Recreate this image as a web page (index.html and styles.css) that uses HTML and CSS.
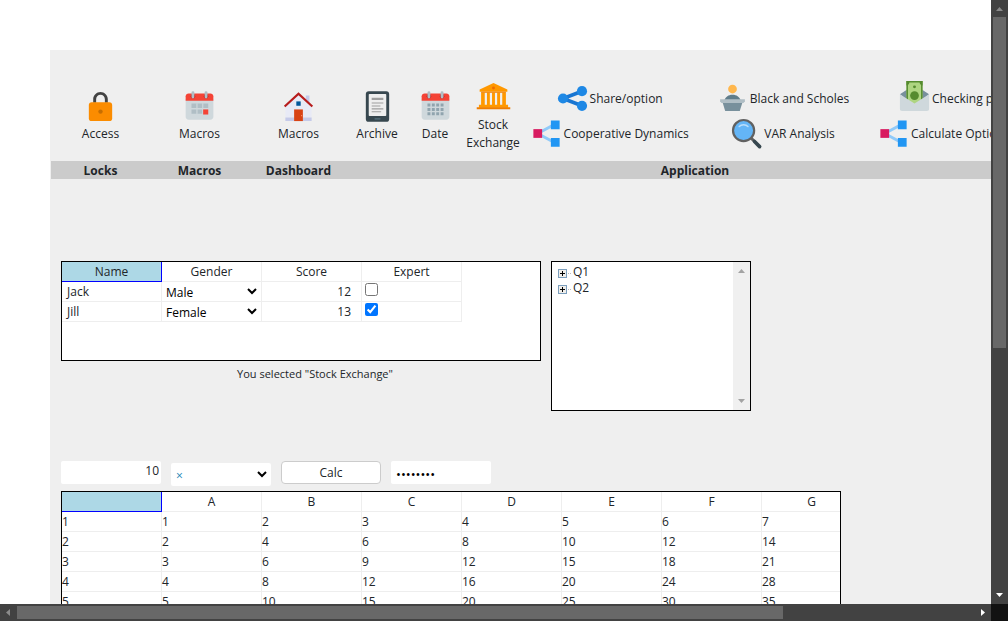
FILE: index.html
```
<!DOCTYPE html>
<html lang="en">
<head>
<meta charset="utf-8">
<title>Dashboard</title>
<link rel="stylesheet" href="styles.css">
</head>
<body>
<svg width="0" height="0" class="defs" aria-hidden="true">
  <symbol id="rings" viewBox="0 0 48 48">
    <path fill="#CFD8DC" d="M5 38V14h38v24c0 2.200-1.800 4-4 4H9c-2.200 0-4-1.800-4-4z"/>
    <path fill="#F44336" d="M43 10v6H5v-6c0-2.200 1.800-4 4-4h30c2.200 0 4 1.800 4 4z"/>
    <circle fill="#B71C1C" cx="15" cy="10" r="3"/><circle fill="#B71C1C" cx="33" cy="10" r="3"/>
    <path stroke="#B0BEC5" stroke-width="4" stroke-linecap="round" d="M15 5v6M33 5v6"/>
  </symbol>
  <symbol id="nodes" viewBox="0 0 48 48">
    <path fill="none" stroke="#90CAF9" stroke-width="4" d="M36 11L12 24l24 13"/>
    <path fill="#D81B60" d="M6 18h12v12H6z"/>
    <path fill="#2196F3" d="M30 6h12v12H30zM30 30h12v12H30z"/>
  </symbol>
</svg>
<main class="view">
  <div class="form">
    <div class="ribbon">
      <section class="group">
        <div class="tools">
          <button class="tool"><svg viewBox="0 0 48 48"><path fill="#424242" d="M24 4c-5.500 0-10 4.500-10 10v5h4v-5c0-3.300 2.700-6 6-6s6 2.700 6 6v5h4v-5c0-5.500-4.500-10-10-10z"/><rect fill="#FB8C00" x="8" y="18" width="32" height="26" rx="4"/><circle fill="#C76E00" cx="24" cy="31" r="3"/></svg>Access</button>
        </div>
        <h2>Locks</h2>
      </section>
      <section class="group">
        <div class="tools">
          <button class="tool"><svg viewBox="0 0 48 48"><use href="#rings"/><path fill="#B0BEC5" d="M13 20h7v6h-7zM21 20h7v6h-7zM29 20h7v6h-7zM13 28h7v6h-7zM21 28h7v6h-7z"/><path stroke="#CFD8DC" d="M20.500 20v14M28.500 20v14"/><path fill="#F44336" d="M29 28h7v7h-7z"/></svg>Macros</button>
        </div>
        <h2>Macros</h2>
      </section>
      <section class="group">
        <div class="tools">
          <button class="tool"><svg viewBox="0 0 48 48"><path fill="#E8EAF6" d="M42 39H6V23L24 6l18 17z"/><path fill="#C5CAE9" d="M39 21l-5-5V9h5zM6 39h36v5H6z"/><path fill="#B71C1C" d="M24 4.300L4 22.900l2 2.200L24 8.400l18 16.700 2-2.200z"/><path fill="#D84315" d="M18 28h12v16H18z"/><path fill="#01579B" d="M21 17h6v6h-6z"/><path fill="#FF8A65" d="M27.500 35.500h1.500v2h-1.500z"/></svg>Macros</button>
        </div>
        <h2>Dashboard</h2>
      </section>
      <section class="group group-wide">
        <div class="tools">
          <button class="tool tool-narrow"><svg viewBox="0 0 48 48"><rect fill="#37474F" x="8" y="3" width="32" height="42" rx="4"/><rect fill="#EEEEEE" x="12" y="7" width="24" height="30" rx="1"/><path fill="#9E9E9E" d="M16 12h16v3H16zM16 18.500h16v1.500H16zM16 22.500h12v1.500H16zM16 26.500h16v1.500H16zM16 30.500h13v1.500H16z"/><path fill="#546E7A" d="M20 40h8v2h-8z"/></svg>Archive</button>
          <button class="tool tool-narrow"><svg viewBox="0 0 48 48"><use href="#rings"/><path fill="#90A4AE" d="M13 20h4v4h-4zM19 20h4v4h-4zM25 20h4v4h-4zM31 20h4v4h-4zM13 26h4v4h-4zM19 26h4v4h-4zM25 26h4v4h-4zM31 26h4v4h-4zM13 32h4v4h-4zM19 32h4v4h-4zM25 32h4v4h-4zM31 32h4v4h-4z"/></svg>Date</button>
          <button class="tool tool-narrow"><svg viewBox="0 0 48 48"><path fill="#FF9800" d="M24 4L5 13v3h38v-3zM7 17h5v17H7zM15 17h4v17h-4zM22 17h4v17h-4zM29 17h4v17h-4zM36 17h5v17h-5zM4 34h40v4H4z"/><path fill="#EF7D00" d="M7 16h34v1.500H7zM1 37.500h46V40H1z"/><circle fill="#EF6C00" cx="24" cy="11" r="2"/></svg>Stock Exchange</button>
          <div class="stack">
            <button class="line"><svg viewBox="0 0 48 48"><path fill="none" stroke="#1976D2" stroke-width="5" d="M37 14L11 24l26 10"/><g fill="#1E88E5"><circle cx="11" cy="24" r="7"/><circle cx="37" cy="14" r="7"/><circle cx="37" cy="34" r="7"/></g></svg>Share/option</button>
            <button class="line"><svg viewBox="0 0 48 48"><use href="#nodes"/></svg>Cooperative Dynamics</button>
          </div>
          <div class="stack">
            <button class="line"><svg viewBox="0 0 48 48"><circle fill="#FFB74D" cx="24" cy="11" r="6"/><path fill="#607D8B" d="M24 19c-6 0-9 3-11 7h22c-2-4-5-7-11-7z"/><path fill="#78909C" d="M10 28h28l-4 13H14z"/><path fill="#B0BEC5" d="M7 25h34v3l-2 2H9l-2-2z"/></svg>Black and Scholes</button>
            <button class="line"><svg viewBox="0 0 48 48"><path stroke="#616161" stroke-width="4" d="M29 29l6 6"/><path stroke="#37474F" stroke-width="5" stroke-linecap="round" d="M35 35l7 7"/><circle fill="#64B5F6" stroke="#616161" stroke-width="3" cx="20" cy="20" r="14.500"/><path fill="none" stroke="#BBDEFB" stroke-width="2" stroke-linecap="round" d="M14 14.500c3-3.500 9-3.500 12 0"/></svg>VAR Analysis</button>
          </div>
          <div class="stack">
            <button class="line"><svg viewBox="0 0 48 48"><path fill="#78909C" d="M4 18L24 5l20 13-20 17z"/><path fill="#AED581" d="M13 0h22v29l-11 7-11-7z"/><path fill="#558B2F" d="M13 0h22v6c-2 0-4-2-4-4H17c0 2-2 4-4 4z"/><path fill="none" stroke="#558B2F" stroke-width="2" d="M14 0v28M34 0v28"/><circle fill="#558B2F" cx="24" cy="20" r="6"/><circle fill="#558B2F" cx="24" cy="8" r="2"/><path fill="#CFD8DC" d="M4 18v20c0 2 1 3 3 3h34c2 0 3-1 3-3V18L24 31z"/></svg>Checking price</button>
            <button class="line"><svg viewBox="0 0 48 48"><use href="#nodes"/></svg>Calculate Option Price</button>
          </div>
        </div>
        <h2>Application</h2>
      </section>
    </div>

    <div class="panels">
      <div class="people">
        <div class="box box-people">
          <table class="grid">
            <tr><th class="picked">Name</th><th>Gender</th><th>Score</th><th>Expert</th></tr>
            <tr><td class="name">Jack</td><td><select aria-label="Gender of Jack"><option>Male</option><option>Female</option></select></td><td class="score">12</td><td><input type="checkbox" aria-label="Jack is an expert"></td></tr>
            <tr><td class="name">Jill</td><td><select aria-label="Gender of Jill"><option>Male</option><option selected>Female</option></select></td><td class="score">13</td><td><input type="checkbox" aria-label="Jill is an expert" checked></td></tr>
          </table>
        </div>
        <p class="message">You selected "Stock Exchange"</p>
      </div>
      <div class="box box-tree">
        <ul class="tree">
          <li><button aria-label="Expand Q1"><svg viewBox="0 0 15 9"><rect x=".5" y=".5" width="8" height="8" fill="#f0eeea" stroke="#7b9ebd"/><path d="M2 4.500h5M4.500 2v5" stroke="#000"/><path d="M10 4.500h1M12 4.500h1" stroke="#bbb"/></svg></button>Q1</li>
          <li><button aria-label="Expand Q2"><svg viewBox="0 0 15 9"><rect x=".5" y=".5" width="8" height="8" fill="#f0eeea" stroke="#7b9ebd"/><path d="M2 4.500h5M4.500 2v5" stroke="#000"/><path d="M10 4.500h1M12 4.500h1" stroke="#bbb"/></svg></button>Q2</li>
        </ul>
        <div class="gutter">
          <svg viewBox="0 0 7 4"><path d="M0 4h7L3.500 0z"/></svg>
          <svg viewBox="0 0 7 4"><path d="M0 0h7L3.500 4z"/></svg>
        </div>
      </div>
    </div>

    <div class="controls">
      <input class="number" type="text" value="10" aria-label="Rows">
      <select class="operator" aria-label="Operator"><option>×</option><option>+</option></select>
      <button class="calc">Calc</button>
      <input class="secret" type="password" value="password" aria-label="Password">
    </div>

    <div class="box box-sheet">
      <table class="grid sheet">
        <tr><th class="picked"></th><th>A</th><th>B</th><th>C</th><th>D</th><th>E</th><th>F</th><th>G</th></tr>
        <tr><td>1</td><td>1</td><td>2</td><td>3</td><td>4</td><td>5</td><td>6</td><td>7</td></tr>
        <tr><td>2</td><td>2</td><td>4</td><td>6</td><td>8</td><td>10</td><td>12</td><td>14</td></tr>
        <tr><td>3</td><td>3</td><td>6</td><td>9</td><td>12</td><td>15</td><td>18</td><td>21</td></tr>
        <tr><td>4</td><td>4</td><td>8</td><td>12</td><td>16</td><td>20</td><td>24</td><td>28</td></tr>
        <tr><td>5</td><td>5</td><td>10</td><td>15</td><td>20</td><td>25</td><td>30</td><td>35</td></tr>
      </table>
    </div>
  </div>
</main>
<div class="bar bar-down">
  <svg class="dim" viewBox="0 0 17 17"><path d="M5 11h7L8.500 7z"/></svg>
  <div class="track"><div class="thumb"></div></div>
  <svg viewBox="0 0 17 17"><path d="M5 6h7l-3.500 4z"/></svg>
</div>
<div class="bar bar-across">
  <svg class="dim" viewBox="0 0 17 17"><path d="M10 5v7L6 8.500z"/></svg>
  <div class="track"><div class="thumb"></div></div>
  <svg viewBox="0 0 17 17"><path d="M7 5v7l4-3.500z"/></svg>
</div>
<div class="corner"></div>
</body>
</html>
```
FILE: styles.css
```
* { box-sizing: border-box; }

body {
  margin: 0;
  height: 100vh;
  display: grid;
  grid-template: minmax(0, 1fr) 17px / minmax(0, 1fr) 17px;
  background: #fff;
  color: #212529;
  font: 12px/18px "Open Sans", "Noto Sans", sans-serif;
}

button, input, select {
  font: inherit;
  color: inherit;
  margin: 0;
}

.defs { position: absolute; }

.view { overflow: hidden; }

.form {
  margin: 50px 0 0 50px;
  min-width: 1190px;
  padding: 1px;
  background: #efefef;
}

/* Ribbon */
.ribbon { display: flex; }
.ribbon::after { content: ""; flex: 1; align-self: flex-end; height: 18px; background: #cbcbcb; }
.group { width: 99px; display: flex; flex-direction: column; }
.group-wide { width: 694px; }
.group h2 {
  margin: 0;
  height: 18px;
  font-size: 12px;
  font-weight: 700;
  line-height: 20px;
  text-align: center;
  background: #cbcbcb;
}
.tools {
  height: 110px;
  padding-top: 20px;
  display: flex;
  align-items: center;
  justify-content: center;
}
.tool, .line {
  display: flex;
  align-items: center;
  padding: 0;
  border: 0;
  background: none;
}
.tool { flex-direction: column; gap: 1px; }
.tool-narrow { width: 58px; }
.tool svg, .line svg { width: 35px; height: 35px; flex: none; }
.stack { flex: 1; display: flex; flex-direction: column; align-items: center; }
.line { white-space: nowrap; }

/* Panels */
.panels {
  display: flex;
  gap: 10px;
  height: 150px;
  margin: 82px 10px 0;
}
.box { border: 1px solid #000; background: #fff; overflow: hidden; }
.people { width: 480px; }
.box-people { height: 100px; }
.message { margin: 4px 0 0; padding-left: 28px; text-align: center; font-size: 11px; }

.grid { width: 400px; table-layout: fixed; border-spacing: 0; }
.grid th, .grid td {
  height: 20px;
  padding: 0;
  border: solid #eee;
  border-width: 0 1px 1px 0;
  font-weight: 400;
  line-height: 19px;
  text-align: left;
}
.grid th { text-align: center; }
.grid th.picked { background: #add8e6; border-color: #00f; }
.grid .name { padding-left: 5px; }
.grid .score { padding-right: 10px; text-align: right; }
.grid select {
  display: block;
  width: 98px;
  height: 19px;
  border: 0;
  padding: 1px 0 0;
  background: #fff;
  color: #000;
}
.grid input { display: block; width: 13px; height: 13px; margin: 0 0 5px 3px; }

.box-tree { width: 200px; display: flex; }
.tree { flex: 1; margin: 0; padding: 2px 6px; list-style: none; }
.tree li { display: flex; align-items: center; line-height: 16px; }
.tree button { padding: 2px 0 0; border: 0; background: none; display: flex; }
.tree svg { width: 15px; height: 9px; }
.gutter {
  width: 17px;
  padding: 7px 0;
  display: flex;
  flex-direction: column;
  align-items: center;
  justify-content: space-between;
  background: #f0f0f0;
}
.gutter svg { width: 7px; height: 4px; fill: #a3a3a3; }

/* Controls */
.controls { display: flex; gap: 10px; height: 30px; margin: 50px 10px 0; }
.controls > * { width: 100px; height: 23px; border: 0; border-radius: 2px; background: #fff; }
.controls .number { padding: 0 2px 4px; text-align: right; }
.controls .operator {
  appearance: none;
  margin-top: 2px;
  padding: 2px 5px 0;
  color: #1883b5;
  background: #fff url("data:image/svg+xml,%3Csvg xmlns='http://www.w3.org/2000/svg' width='10' height='7'%3E%3Cpath d='M1 1l4 4 4-4' fill='none' stroke='%23000' stroke-width='2'/%3E%3C/svg%3E") no-repeat right 4px center;
}
.controls .calc { border: 1px solid #ccc; border-radius: 4px; }
.controls .secret { padding: 3px 5px 0; color: #000; font-size: 13px; }

/* Sheet */
.box-sheet { width: 780px; margin: 0 10px; }
.sheet { width: 800px; }

/* Scroll bars */
.bar { display: flex; background: #424242; }
.bar svg { width: 17px; height: 17px; flex: none; fill: #fff; }
.bar .dim { fill: #8b8b8b; }
.bar-down { flex-direction: column; }
.track { flex: 1; display: flex; }
.bar-down .track { flex-direction: column; padding: 0 2px; }
.bar-across .track { padding: 2px 0; }
.thumb { background: #686868; }
.bar-down .thumb { height: 58%; }
.bar-across .thumb { width: 80%; }
.corner { background: #121212; }
```
